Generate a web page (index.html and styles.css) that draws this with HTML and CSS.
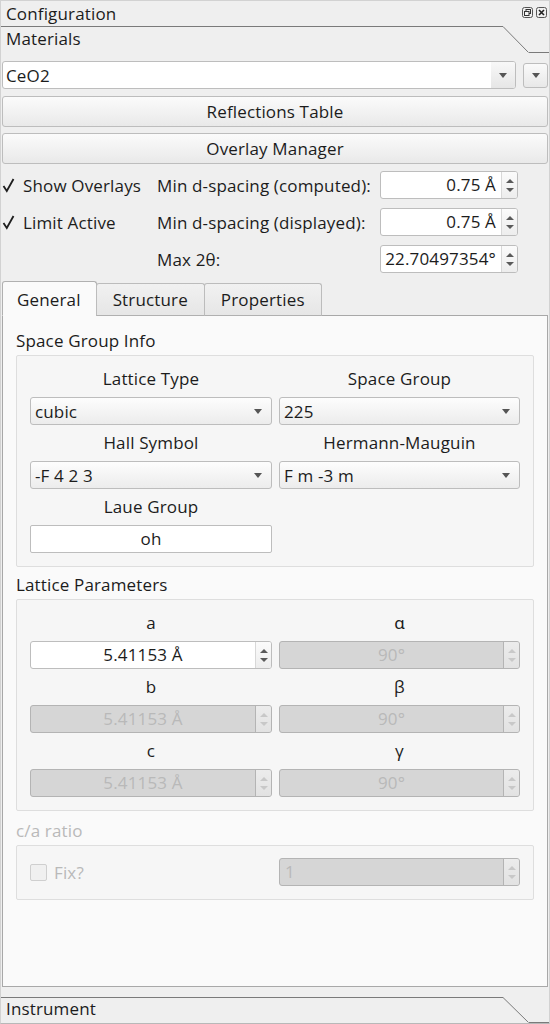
FILE: index.html
```html
<!DOCTYPE html>
<html>
<head>
<meta charset="utf-8">
<title>Configuration</title>
<link rel="stylesheet" href="styles.css">
</head>
<body>
<div class="window">
  <div class="titlebar">
    <span class="title">Configuration</span>
    <div class="title-btns">
      <svg class="tbtn" width="11" height="11" viewBox="0 0 11 11"><rect x="0.5" y="0.5" width="10" height="10" rx="2" fill="none" stroke="#555"/><rect x="4" y="2.5" width="4.5" height="4" fill="none" stroke="#333"/><rect x="2.5" y="4.5" width="4.5" height="4" fill="#f4f4f4" stroke="#333"/></svg>
      <svg class="tbtn" width="11" height="11" viewBox="0 0 11 11"><rect x="0.5" y="0.5" width="10" height="10" rx="2" fill="none" stroke="#555"/><path d="M3 3 L8 8 M8 3 L3 8" stroke="#222" stroke-width="1.6"/></svg>
    </div>
  </div>

  <div class="tb-tab">
    <div class="tb-label">Materials</div>
    <svg class="tb-slant" width="26" height="27" viewBox="0 0 26 27"><path d="M0 0.5 L25.5 26.5" stroke="#7a7a7a" stroke-width="1" fill="none"/></svg>
    <div class="tb-rest"></div>
  </div>

  <div class="materials">
    <div class="combo-row">
      <div class="combo editable">
        <span class="combo-text">CeO2</span>
        <span class="combo-btn"><i class="arr-down"></i></span>
      </div>
      <div class="tool-btn"><i class="arr-down"></i></div>
    </div>

    <div class="push">Reflections Table</div>
    <div class="push">Overlay Manager</div>

    <div class="overlay-form">
      <div class="check"><svg class="tick" width="14" height="16" viewBox="0 0 14 16"><path d="M1.5 9 L4.8 14 L11.5 2" stroke="#1e1e1e" stroke-width="1.8" fill="none"/></svg><span>Show Overlays</span></div>
      <div class="flabel">Min d-spacing (computed):</div>
      <div class="spin right"><span class="spin-val">0.75 Å</span><span class="spin-btns"><i class="arr-up"></i><i class="arr-down sm"></i></span></div>

      <div class="check"><svg class="tick" width="14" height="16" viewBox="0 0 14 16"><path d="M1.5 9 L4.8 14 L11.5 2" stroke="#1e1e1e" stroke-width="1.8" fill="none"/></svg><span>Limit Active</span></div>
      <div class="flabel">Min d-spacing (displayed):</div>
      <div class="spin right"><span class="spin-val">0.75 Å</span><span class="spin-btns"><i class="arr-up"></i><i class="arr-down sm"></i></span></div>

      <div></div>
      <div class="flabel">Max 2θ:</div>
      <div class="spin right"><span class="spin-val">22.70497354°</span><span class="spin-btns"><i class="arr-up"></i><i class="arr-down sm"></i></span></div>
    </div>

    <div class="tabwidget">
      <div class="tabbar">
        <div class="tab active">General</div>
        <div class="tab">Structure</div>
        <div class="tab">Properties</div>
      </div>
      <div class="pane">
        <div class="gtitle">Space Group Info</div>
        <div class="gbox grid2">
          <div class="glabel">Lattice Type</div>
          <div class="glabel">Space Group</div>
          <div class="combo"><span class="combo-text">cubic</span><i class="arr-down"></i></div>
          <div class="combo"><span class="combo-text">225</span><i class="arr-down"></i></div>
          <div class="glabel">Hall Symbol</div>
          <div class="glabel">Hermann-Mauguin</div>
          <div class="combo"><span class="combo-text">-F 4 2 3</span><i class="arr-down"></i></div>
          <div class="combo"><span class="combo-text">F m -3 m</span><i class="arr-down"></i></div>
          <div class="glabel">Laue Group</div>
          <div></div>
          <div class="ledit">oh</div>
          <div></div>
        </div>

        <div class="gtitle">Lattice Parameters</div>
        <div class="gbox grid2">
          <div class="glabel">a</div>
          <div class="glabel">ɑ</div>
          <div class="spin center"><span class="spin-val">5.41153 Å</span><span class="spin-btns"><i class="arr-up"></i><i class="arr-down sm"></i></span></div>
          <div class="spin center disabled"><span class="spin-val">90°</span><span class="spin-btns"><i class="arr-up"></i><i class="arr-down sm"></i></span></div>
          <div class="glabel">b</div>
          <div class="glabel">β</div>
          <div class="spin center disabled"><span class="spin-val">5.41153 Å</span><span class="spin-btns"><i class="arr-up"></i><i class="arr-down sm"></i></span></div>
          <div class="spin center disabled"><span class="spin-val">90°</span><span class="spin-btns"><i class="arr-up"></i><i class="arr-down sm"></i></span></div>
          <div class="glabel">c</div>
          <div class="glabel">γ</div>
          <div class="spin center disabled"><span class="spin-val">5.41153 Å</span><span class="spin-btns"><i class="arr-up"></i><i class="arr-down sm"></i></span></div>
          <div class="spin center disabled"><span class="spin-val">90°</span><span class="spin-btns"><i class="arr-up"></i><i class="arr-down sm"></i></span></div>
        </div>

        <div class="gtitle dim">c/a ratio</div>
        <div class="gbox grid2 ratio">
          <div class="check dimcheck"><span class="cbox"></span><span>Fix?</span></div>
          <div class="spin left disabled"><span class="spin-val">1</span><span class="spin-btns"><i class="arr-up"></i><i class="arr-down sm"></i></span></div>
        </div>
      </div>
    </div>
  </div>

  <div class="tb-tab last">
    <div class="tb-label">Instrument</div>
    <svg class="tb-slant" width="26" height="26" viewBox="0 0 26 26"><path d="M0 0.5 L25.5 25.5" stroke="#7a7a7a" stroke-width="1" fill="none"/></svg>
    <div class="tb-rest"></div>
  </div>
</div>
</body>
</html>
```

FILE: styles.css
```css
* { box-sizing: border-box; }

html, body {
  margin: 0;
  padding: 0;
}

body {
  width: 550px;
  height: 1024px;
  background: #efefef;
  font-family: "Open Sans", "Noto Sans", sans-serif;
  font-size: 17px;
  letter-spacing: 0.15px;
  color: #1c1c1c;
  overflow: hidden;
}

.window {
  height: 1024px;
  display: flex;
  flex-direction: column;
  border: 1px solid #d2d2d2;
  border-bottom-color: #b8b8b8;
}

/* title bar */
.titlebar {
  height: 25px;
  display: flex;
  align-items: center;
  justify-content: space-between;
  padding: 0 2px 0 5px;
}
.title { line-height: 22px; }
.title-btns {
  display: flex;
  gap: 3px;
  align-self: flex-start;
  margin-top: 6px;
}
.tbtn { display: block; }

/* toolbox tab */
.tb-tab {
  height: 27px;
  display: flex;
  flex-shrink: 0;
}
.tb-label {
  flex: 1;
  border-top: 1px solid #7a7a7a;
  padding-left: 5px;
  line-height: 24px;
}
.tb-slant { display: block; flex-shrink: 0; }
.tb-rest {
  width: 20px;
  border-bottom: 1px solid #7a7a7a;
}
.tb-tab.last {
  height: 26px;
  margin-top: 10px;
}
.tb-tab.last .tb-label { line-height: 22px; }

/* materials area */
.materials {
  flex: 1;
  display: flex;
  flex-direction: column;
  padding: 8px 0 0 1px;
}

.combo-row {
  display: flex;
  align-items: center;
  gap: 7px;
  padding-right: 1px;
}

.combo {
  height: 28px;
  border: 1px solid #bdbdbd;
  border-radius: 3px;
  background: linear-gradient(#fdfdfd, #ececec);
  display: flex;
  align-items: center;
  padding: 0 9px 0 4px;
}
.combo-text { flex: 1; white-space: nowrap; }
.combo.editable {
  flex: 1;
  background: #ffffff;
  padding: 0;
  overflow: hidden;
}
.combo.editable .combo-text { padding-left: 3px; }
.combo-btn {
  width: 24px;
  height: 100%;
  display: flex;
  align-items: center;
  justify-content: center;
  background: linear-gradient(#f8f8f8, #e6e6e6);
}
.tool-btn {
  width: 25px;
  height: 25px;
  border: 1px solid #bdbdbd;
  border-radius: 3px;
  background: linear-gradient(#fafafa, #e8e8e8);
  display: flex;
  align-items: center;
  justify-content: center;
}

.arr-down {
  display: block;
  width: 0;
  height: 0;
  border-left: 4.5px solid transparent;
  border-right: 4.5px solid transparent;
  border-top: 5px solid #555;
}
.arr-down.sm {
  border-left-width: 4px;
  border-right-width: 4px;
  border-top: 4px solid #5a5a5a;
}
.arr-up {
  display: block;
  width: 0;
  height: 0;
  border-left: 4px solid transparent;
  border-right: 4px solid transparent;
  border-bottom: 4px solid #5a5a5a;
}

.push {
  height: 31px;
  margin: 7px 1px 0 0;
  border: 1px solid #bdbdbd;
  border-radius: 3px;
  background: linear-gradient(#fbfbfb, #e9e9e9);
  text-align: center;
  line-height: 29px;
}
.push + .push { margin-top: 6px; }

/* overlay form */
.overlay-form {
  margin-top: 7px;
  display: grid;
  grid-template-columns: 155px 223px 138px;
  grid-auto-rows: 28px;
  row-gap: 9px;
  align-items: center;
}
.check {
  display: flex;
  align-items: center;
  gap: 7px;
  white-space: nowrap;
}
.tick { display: block; }
.flabel { white-space: nowrap; }

.spin {
  height: 28px;
  border: 1px solid #bdbdbd;
  border-radius: 3px;
  background: #ffffff;
  display: flex;
  overflow: hidden;
}
.spin-val {
  flex: 1;
  line-height: 26px;
  white-space: nowrap;
}
.spin.right .spin-val { text-align: right; padding-right: 5px; }
.spin.center .spin-val { text-align: center; }
.spin.left .spin-val { text-align: left; padding-left: 5px; }
.spin-btns {
  width: 16px;
  border-left: 1px solid #d8d8d8;
  background: linear-gradient(#fbfbfb, #ededed);
  display: flex;
  flex-direction: column;
  align-items: center;
  justify-content: center;
  gap: 5px;
}
.spin.disabled {
  background: #d6d6d6;
  border-color: #b4b4b4;
}
.spin.disabled .spin-val { color: #b9b9b9; }
.spin.disabled .spin-btns {
  background: linear-gradient(#ececec, #e2e2e2);
  border-left-color: #b4b4b4;
}
.spin.disabled .arr-up { border-bottom-color: #c8c8c8; }
.spin.disabled .arr-down { border-top-color: #c8c8c8; }

/* tab widget */
.tabwidget {
  flex: 1;
  display: flex;
  flex-direction: column;
  margin-top: 8px;
  padding-right: 1px;
}
.tabbar {
  display: flex;
  align-items: flex-end;
  height: 35px;
  position: relative;
  z-index: 1;
  margin-bottom: -1px;
}
.tab {
  height: 33px;
  border: 1px solid #bcbcbc;
  border-bottom: 1px solid #b0b0b0;
  border-radius: 3px 3px 0 0;
  background: linear-gradient(#f1f1f1, #e6e6e6);
  padding: 0 16px 0 16px;
  line-height: 31px;
  margin-left: -1px;
}
.tab:first-child { margin-left: 0; }
.tab.active {
  height: 35px;
  background: #fafafa;
  border-color: #b0b0b0;
  border-bottom-color: #fafafa;
  padding: 0 15px 0 14px;
  line-height: 36px;
}
.pane {
  flex: 1;
  background: #fafafa;
  border: 1px solid #a8a8a8;
  padding: 13px 13px 0 13px;
}

.gtitle {
  line-height: 24px;
  height: 24px;
  margin-bottom: 2px;
}
.gtitle.dim { color: #b9b9b9; margin-top: 8px; }

.gbox {
  border: 1px solid #dedede;
  border-radius: 2px;
  background: #f6f6f6;
  padding: 11px 14px 13px 13px;
  margin-bottom: 6px;
}
.grid2 {
  display: grid;
  grid-template-columns: 242px 241px;
  column-gap: 7px;
  row-gap: 6px;
}
.glabel {
  text-align: center;
  line-height: 24px;
}
.ledit {
  height: 28px;
  border: 1px solid #bdbdbd;
  border-radius: 2px;
  background: #fff;
  text-align: center;
  line-height: 26px;
}

.gbox.ratio {
  margin-top: 1px;
  padding-top: 12px;
  align-items: center;
}
.dimcheck { color: #b9b9b9; }
.cbox {
  width: 17px;
  height: 17px;
  border: 1px solid #cfcfcf;
  border-radius: 2px;
  background: #f0f0f0;
}
```
